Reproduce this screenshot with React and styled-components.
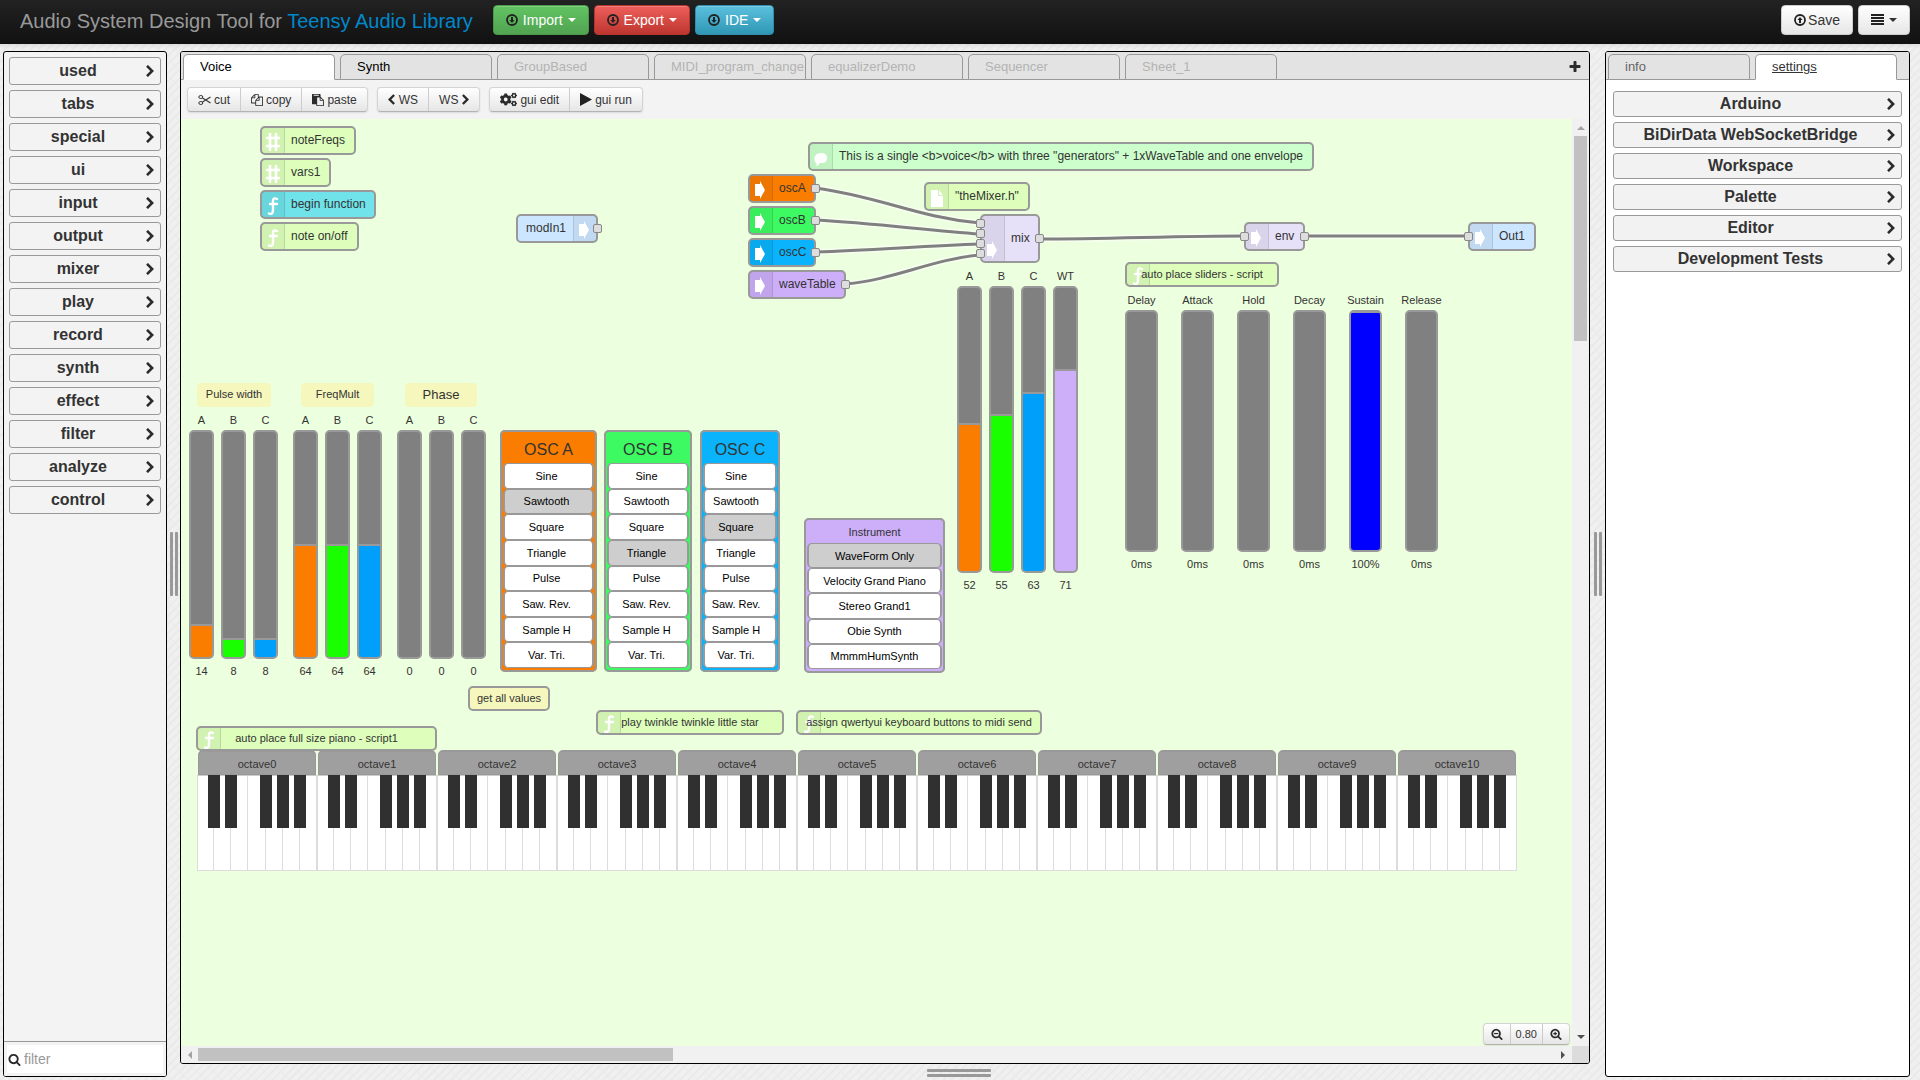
import { useState } from "react"
import styled, { createGlobalStyle, css } from "styled-components"
import { FaCogs } from "react-icons/fa"

const GlobalStyle = createGlobalStyle`
  *,
  *::before,
  *::after {
    box-sizing: border-box;
  }

  body {
    margin: 0;
    font-family: "Liberation Sans", Arial, sans-serif;
    font-size: 14px;
    line-height: 20px;
    color: #333;
    background-color: #f0f0f0;
    background-image:
      repeating-linear-gradient(-45deg, #eaeaea 0 2px, transparent 2px 6px),
      repeating-linear-gradient(45deg, #ededed 0 2px, transparent 2px 12px);
  }

  button,
  input {
    font-family: inherit;
    color: inherit;
    margin: 0;
  }

  svg {
    display: block;
    flex-shrink: 0;
  }
`

/* ---------- icons ---------- */

const glyphs = {
  right:
    "M1363 877l-742 742q-19 19-45 19t-45-19l-166-166q-19-19-19-45t19-45l531-531-531-531q-19-19-19-45t19-45l166-166q19-19 45-19t45 19l742 742q19 19 19 45t-19 45z",
  left:
    "M1427 301l-531 531 531 531q19 19 19 45t-19 45l-166 166q-19 19-45 19t-45-19l-742-742q-19-19-19-45t19-45l742-742q19-19 45-19t45 19l166 166q19 19 19 45t-19 45z",
  plus:
    "M1600 736v192q0 40-28 68t-68 28h-416v416q0 40-28 68t-68 28h-192q-40 0-68-28t-28-68v-416h-416q-40 0-68-28t-28-68v-192q0-40 28-68t68-28h416v-416q0-40 28-68t68-28h192q40 0 68 28t28 68v416h416q40 0 68 28t28 68z",
  search:
    "M1216 832q0-185-131.500-316.500t-316.500-131.500-316.500 131.500-131.500 316.500 131.500 316.500 316.500 131.500 316.500-131.500 131.500-316.500zm512 832q0 52-38 90t-90 38q-54 0-90-38l-343-342q-179 124-399 124-143 0-273.500-55.500t-225-150-150-225-55.500-273.500 55.500-273.500 150-225 225-150 273.500-55.500 273.500 55.500 225 150 150 225 55.500 273.500q0 220-124 399l343 343q37 37 37 90z",
  copy:
    "M1696 384q40 0 68 28t28 68v1216q0 40-28 68t-68 28h-960q-40 0-68-28t-28-68v-288h-544q-40 0-68-28t-28-68v-672q0-40 20-88t48-76l408-408q28-28 76-48t88-20h416q40 0 68 28t28 68v328q68-40 128-40h416zm-544 213l-299 299h299v-299zm-640-384l-299 299h299v-299zm196 647l316-316v-416h-384v416q0 40-28 68t-68 28h-416v640h512v-256q0-40 20-88t48-76zm956 804v-1152h-384v416q0 40-28 68t-68 28h-416v640h896z",
  paste:
    "M768 1664h896v-640h-416q-40 0-68-28t-28-68v-416h-384v1152zm256-1440v-64q0-13-9.500-22.500t-22.500-9.500h-704q-13 0-22.500 9.500t-9.500 22.500v64q0 13 9.500 22.500t22.500 9.500h704q13 0 22.500-9.500t9.500-22.500zm256 672h299l-299-299v299zm512 128v672q0 40-28 68t-68 28h-960q-40 0-68-28t-28-68v-160h-544q-40 0-68-28t-28-68v-1344q0-40 28-68t68-28h1088q40 0 68 28t28 68v328q21 13 36 28l408 408q28 28 48 76t20 88z",
}

const Glyph = ({ name, size = 12, children }) => (
  <svg width={size} height={size} viewBox="0 0 1792 1792" fill="#2b2b2b" aria-hidden="true">
    <path d={glyphs[name]} />
    {children}
  </svg>
)

const Chevron = ({ dir = "right", height = 12 }) => (
  <svg
    width={Math.round(height * 0.66)}
    height={height}
    viewBox={dir === "right" ? "320 40 1080 1584" : "392 40 1080 1584"}
    fill="#2b2b2b"
    aria-hidden="true"
  >
    <path d={glyphs[dir]} />
  </svg>
)

const CircleArrow = ({ up }) => (
  <svg width="12" height="12" viewBox="0 0 12 12" aria-hidden="true">
    <circle cx="6" cy="6" r="5" fill="none" stroke="#222" strokeWidth="1.8" />
    <path
      d="M5 3h2v3h1.600L6 9 3.400 6H5z"
      fill="#222"
      transform={up ? "rotate(180 6 6)" : undefined}
    />
  </svg>
)

const Scissors = () => (
  <svg width="13" height="12" viewBox="0 0 13 12" fill="none" stroke="#333" aria-hidden="true">
    <ellipse cx="2.800" cy="3" rx="2" ry="1.500" />
    <ellipse cx="2.800" cy="9" rx="2" ry="1.500" />
    <path d="M4.500 4L12.500 9M4.500 8L12.500 3" strokeWidth="1.100" />
  </svg>
)

const Play = () => (
  <svg width="12" height="13" viewBox="0 0 12 13" fill="#222" aria-hidden="true">
    <path d="M0 0v13L12 6.500z" />
  </svg>
)

const Bars = () => (
  <svg width="13" height="12" viewBox="0 0 13 12" fill="#222" aria-hidden="true">
    <path d="M0 0h13v2H0zM0 3h13v2H0zM0 6h13v2H0zM0 9h13v2H0z" />
  </svg>
)

const NodeIcon = ({ name }) => (
  <svg width="14" height="18" viewBox="0 0 14 18" aria-hidden="true">
    {name === "arrow" && <path d="M1 3h5V0l5 9-5 9v-3H1z" fill="#fff" />}
    {name === "hash" && (
      <path d="M4 0v18M10 0v18M0 5h14M0 13h14" stroke="#fff" strokeWidth="2.600" />
    )}
    {name === "fn" && (
      <path
        d="M11 2Q7 0 7 4v9q0 5-4 3.500M4 7h7"
        fill="none"
        stroke="#fff"
        strokeWidth="2.400"
        strokeLinecap="round"
      />
    )}
    {name === "bubble" && (
      <path d="M7 4c4 0 6 2 6 5s-2 5-5 5c-2 0-3 0-3 1s-2 2-3 2c1-1 1-2 0-3-3-3-2-10 5-10z" fill="#fff" />
    )}
    {name === "file" && <path d="M1 1h7v6h5v11H1zM9 1l4 5H9z" fill="#fff" />}
  </svg>
)

/* ---------- shell ---------- */

const Shell = styled.div`
  display: flex;
  flex-direction: column;
  height: 100vh;
`

const Header = styled.header`
  display: flex;
  align-items: center;
  gap: 5px;
  height: 44px;
  padding: 0 10px 4px 20px;
  background: linear-gradient(#222, #111);
  box-shadow: 0 1px 5px rgba(0, 0, 0, 0.1);
`

const HeaderStart = styled.div`
  display: flex;
  align-items: center;
  gap: 5px;
  margin-right: auto;
`

const Brand = styled.h1`
  margin: 0;
  padding: 2px 15px 0 0;
  font-size: 20px;
  font-weight: 400;
  line-height: 20px;
  color: #999;
  white-space: nowrap;

  a {
    color: #08c;
    text-decoration: none;
  }
`

const tones = {
  green: css`
    color: #fff;
    background: linear-gradient(#62c462, #51a351);
    border-color: #4b9a4b;
  `,
  red: css`
    color: #fff;
    background: linear-gradient(#ee5f5b, #bd362f);
    border-color: #b5342e;
  `,
  cyan: css`
    color: #fff;
    background: linear-gradient(#5bc0de, #2f96b4);
    border-color: #2f8fac;
  `,
  plain: css`
    color: #333;
    background: linear-gradient(#fff, #e6e6e6);
    border-color: #ccc;
  `,
}

const HeaderButton = styled.button`
  display: flex;
  align-items: center;
  gap: ${({ $tight }) => ($tight ? 2 : 5)}px;
  height: 30px;
  padding: 0 12px;
  border: 1px solid;
  border-radius: 4px;
  font-size: 14px;
  line-height: 20px;
  box-shadow: inset 0 1px 0 rgba(255, 255, 255, 0.2);
  ${({ $tone }) => tones[$tone]}
`

const Caret = styled.span`
  border: 4px solid transparent;
  border-top-color: currentColor;
  border-bottom: 0;
`

const Main = styled.main`
  flex: 1;
  display: grid;
  grid-template-columns: 164px 13px minmax(0, 1fr) 15px 305px;
  min-height: 0;
  padding: 7px 10px 3px 3px;
`

const Panel = styled.section`
  display: flex;
  flex-direction: column;
  min-width: 0;
  min-height: 0;
  background: ${({ $bg }) => $bg};
  border: 1px solid #000;
  border-radius: 3px;
  overflow: hidden;
`

const Column = styled.div`
  display: flex;
  flex-direction: column;
  min-width: 0;
  min-height: 0;

  > ${Panel} {
    flex: 1;
  }
`

const Splitter = styled.div`
  display: flex;
  flex-direction: ${({ $horizontal }) => ($horizontal ? "column" : "row")};
  align-items: center;
  justify-content: center;
  gap: 2px;
  ${({ $horizontal }) => $horizontal && "height: 13px; padding: 4px 0 0 148px;"}

  &::before,
  &::after {
    content: "";
    width: ${({ $horizontal }) => ($horizontal ? "64px" : "3px")};
    height: ${({ $horizontal }) => ($horizontal ? "3px" : "64px")};
    background: #999;
    border-radius: 1px;
  }
`

/* ---------- category lists ---------- */

const CategoryList = styled.nav`
  flex: 1;
  display: flex;
  flex-direction: column;
  gap: 5px;
  padding: ${({ $pad }) => $pad};
`

const CategoryButton = styled.button`
  display: flex;
  align-items: center;
  height: ${({ $h }) => $h}px;
  padding: 0 6px 0 0;
  border: 1px solid #999;
  border-radius: 3px;
  background: ${({ $bg }) => $bg};
  font-size: 16px;
  font-weight: 700;
  line-height: 20px;

  span {
    flex: 1;
    text-align: center;
  }
`

const FilterBar = styled.label`
  display: flex;
  align-items: center;
  gap: 3px;
  height: 35px;
  margin-top: auto;
  padding-left: 4px;
  border-top: 1px solid #999;
  background: #fff;
  box-shadow: inset 0 0 0 3px #f3f3f3;
`

const FilterInput = styled.input`
  flex: 1;
  min-width: 0;
  padding: 0;
  border: 0;
  outline: 0;
  background: transparent;
  font-size: 14px;
  line-height: 20px;

  &::placeholder {
    color: #999;
    opacity: 1;
  }
`

/* ---------- tabs and toolbar ---------- */

const TabBar = styled.div`
  display: flex;
  align-items: flex-start;
  gap: 5px;
  height: 28px;
  flex-shrink: 0;
  padding: 2px 7px 0 2px;
  border-bottom: 1px solid #999;
  background: #e3e3e3;
`

const Tab = styled.button`
  width: ${({ $w }) => $w}px;
  height: 26px;
  flex-shrink: 0;
  padding: 0 0 0 16px;
  border: 1px solid #999;
  border-bottom-color: ${({ $active }) => ($active ? "#fff" : "#999")};
  border-radius: 5px 5px 0 0;
  background: ${({ $active }) => ($active ? "#fff" : "#e3e3e3")};
  color: ${({ $color }) => $color};
  font-size: 13px;
  line-height: 20px;
  text-align: left;
  text-decoration: ${({ $underline }) => ($underline ? "underline" : "none")};
  white-space: nowrap;
  overflow: hidden;
`

const AddTab = styled.button`
  margin-left: auto;
  height: 26px;
  padding: 0;
  border: 0;
  background: none;
`

const Toolbar = styled.div`
  display: flex;
  gap: 9px;
  flex-shrink: 0;
  height: 39px;
  padding: 7px 6px;
  background: #f3f3f3;
`

const ToolButton = styled.button`
  display: flex;
  align-items: center;
  gap: 4px;
  height: ${({ $h = 23 }) => $h}px;
  padding: 0 ${({ $pad = 10 }) => $pad}px;
  border: 0;
  background: none;
  font-size: ${({ $size = 12 }) => $size}px;
  line-height: 16px;
  white-space: nowrap;

  & + & {
    border-left: 1px solid #ccc;
  }
`

const ButtonGroup = styled.div`
  display: flex;
  border: 1px solid #d4d4d4;
  border-bottom-color: #b3b3b3;
  border-radius: 4px;
  background: linear-gradient(#fff, #e6e6e6);
  box-shadow: 0 1px 2px rgba(0, 0, 0, 0.1);

  ${ToolButton} {
    gap: ${({ $tight }) => ($tight ? 3 : 4)}px;
  }
`

/* ---------- workspace ---------- */

const Workspace = styled.div`
  flex: 1;
  display: grid;
  grid-template: minmax(0, 1fr) 17px / minmax(0, 1fr) 17px;
  min-height: 0;
`

const Canvas = styled.div`
  position: relative;
  overflow: hidden;
  background: #ecffde;
`

const ScrollTrack = styled.div`
  display: flex;
  flex-direction: ${({ $vertical }) => ($vertical ? "column" : "row")};
  align-items: center;
  justify-content: space-between;
  padding: ${({ $vertical }) => ($vertical ? "6px 2px" : "2px 6px")};
  background: #f1f1f1;
`

const ScrollRail = styled.div`
  flex: 1;
  align-self: stretch;
  margin: ${({ $vertical }) => ($vertical ? "5px 0" : "0 5px")};
`

const ScrollThumb = styled.div`
  width: ${({ $vertical }) => ($vertical ? "100%" : "35%")};
  height: ${({ $vertical }) => ($vertical ? "23%" : "100%")};
  background: #c1c1c1;
`

const ScrollCorner = styled.div`
  background: #dcdcdc;
`

const arrowShape = {
  up: "M0 5L4 1l4 4z",
  down: "M0 1l4 4 4-4z",
  left: "M5 0L1 4l4 4z",
  right: "M1 0l4 4-4 4z",
}

const ScrollArrow = ({ dir, color }) => {
  const tall = dir === "left" || dir === "right"
  return (
    <svg width={tall ? 6 : 8} height={tall ? 8 : 6} fill={color} aria-hidden="true">
      <path d={arrowShape[dir]} />
    </svg>
  )
}

/* Everything on the canvas is placed at its own x/y. */
const placed = css`
  position: absolute;
  left: ${({ $x }) => $x}px;
  top: ${({ $y }) => $y}px;
`

const Wires = styled.svg`
  position: absolute;
  inset: 0;
  width: 100%;
  height: 100%;
  fill: none;
`

const NodeBox = styled.div`
  ${placed}
  display: flex;
  flex-direction: ${({ $flip }) => ($flip ? "row-reverse" : "row")};
  width: ${({ $w }) => $w}px;
  height: ${({ $h }) => $h}px;
  border: 2px solid #999;
  border-radius: 5px;
  background: ${({ $bg }) => $bg};
  font-size: 12px;
  line-height: 16px;
  white-space: nowrap;
`

const NodeBadge = styled.span`
  display: flex;
  align-items: ${({ $low }) => ($low ? "flex-end" : "center")};
  width: 23px;
  padding: 3px 0 ${({ $low }) => ($low ? 2 : 0)}px 4px;
  background: rgba(0, 0, 0, 0.05);
  border: 0 solid rgba(0, 0, 0, 0.1);
  border-width: ${({ $flip }) => ($flip ? "0 0 0 1px" : "0 1px 0 0")};
`

const NodeLabel = styled.span`
  flex: 1;
  align-self: center;
  padding: 0 0 2px ${({ $flip }) => ($flip ? 8 : 6)}px;
`

const Port = styled.span`
  ${placed}
  width: 9px;
  height: 9px;
  border: 1px solid #888;
  border-radius: 2px;
  background: #ddd;
`

const ScriptButton = styled.button`
  ${placed}
  display: grid;
  align-items: center;
  width: ${({ $w }) => $w}px;
  height: 25px;
  padding: 0;
  border: 2px solid #999;
  border-radius: 5px;
  background: ${({ $bg = "#ddffbb" }) => $bg};
  font-size: 11px;
  line-height: 16px;
  white-space: nowrap;

  > * {
    grid-area: 1 / 1;
  }

  ${NodeBadge} {
    height: 21px;
  }
`

const ScriptLabel = styled.span`
  padding-bottom: 2px;
`

const Tag = styled.div`
  ${placed}
  width: ${({ $w }) => $w}px;
  height: 24px;
  border-radius: 4px;
  background: #f5f7bd;
  font-size: ${({ $size = 11 }) => $size}px;
  line-height: 23px;
  text-align: center;
`

const SliderBank = styled.div`
  ${placed}
  display: flex;
  gap: ${({ $gap }) => $gap}px;
`

const SliderField = styled.label`
  display: flex;
  flex-direction: column;
  align-items: center;
  width: ${({ $w }) => $w}px;
  font-size: 11px;
  line-height: 16px;
  white-space: nowrap;
`

const SliderName = styled.span`
  margin-bottom: 2px;
`

const SliderValue = styled.output`
  margin-top: 4px;
`

const Slider = styled.input`
  appearance: none;
  writing-mode: vertical-lr;
  direction: rtl;
  width: ${({ $w }) => $w}px;
  height: ${({ $h }) => $h}px;
  border: 2px solid #999;
  border-radius: 5px;
  background: ${({ $fill, $pct }) =>
    $pct > 0
      ? `linear-gradient(to top, ${$fill} calc(${$pct}% - 1px), #999 calc(${$pct}% - 1px) calc(${$pct}% + 1px), #808080 0)`
      : "#808080"};

  &::-webkit-slider-thumb {
    appearance: none;
    width: 100%;
    height: 1px;
    background: transparent;
  }
`

const ListBox = styled.fieldset`
  ${placed}
  display: flex;
  flex-direction: column;
  width: ${({ $w }) => $w}px;
  height: ${({ $h }) => $h}px;
  min-width: 0;
  margin: 0;
  padding: 0 1px 2px;
  border: 2px solid #999;
  border-radius: 5px;
  background: ${({ $bg }) => $bg};
`

const ListTitle = styled.div`
  flex-shrink: 0;
  height: ${({ $h }) => $h}px;
  padding-top: ${({ $big }) => ($big ? 8 : 4)}px;
  font-size: ${({ $big }) => ($big ? 16 : 11)}px;
  line-height: ${({ $big }) => ($big ? 20 : 16)}px;
  text-align: center;
`

const ListItem = styled.button`
  flex: 1;
  min-height: 0;
  padding: 0 ${({ $shift }) => $shift}px 0 0;
  border: 2px solid #999;
  border-bottom-width: 1px;
  border-top-width: 1px;
  border-radius: 5px;
  background: ${({ $selected }) => ($selected ? "#cecece" : "#fff")};
  color: #000;
  font-size: 11px;
  line-height: 16px;
  white-space: nowrap;
`

const Piano = styled.div`
  ${placed}
  display: flex;
`

const OctaveBox = styled.div`
  width: 120px;
`

const OctaveTitle = styled.div`
  height: 25px;
  margin: 0 1px;
  padding-top: 4px;
  border: 1px solid #999;
  border-top-width: 2px;
  border-radius: 5px 5px 0 0;
  background: #9f9f9f;
  font-size: 11px;
  line-height: 16px;
  text-align: center;
`

const Keys = styled.div`
  position: relative;
  display: grid;
  grid-template-columns: repeat(7, 1fr);
  height: 96px;
`

const WhiteKey = styled.button`
  padding: 0;
  border: 1px solid #dcdcdc;
  border-left-width: ${({ $first }) => ($first ? 1 : 0)}px;
  border-top-color: #ccc;
  background: #fff;
`

const BlackKey = styled.button`
  position: absolute;
  top: 0;
  left: calc(${({ $after }) => $after} * 100% / 7 - 6px);
  width: 12px;
  height: 53px;
  padding: 0;
  border: 0;
  background: #303030;
`

const ZoomControls = styled(ButtonGroup)`
  position: absolute;
  right: 2px;
  bottom: 1px;
`

/* ---------- data ---------- */

const palette = [
  "used", "tabs", "special", "ui", "input", "output", "mixer",
  "play", "record", "synth", "effect", "filter", "analyze", "control",
]

const settings = [
  "Arduino", "BiDirData WebSocketBridge", "Workspace", "Palette", "Editor", "Development Tests",
]

const sheets = [
  { name: "Voice", color: "#000" },
  { name: "Synth", color: "#000" },
  { name: "GroupBased" },
  { name: "MIDI_program_change" },
  { name: "equalizerDemo" },
  { name: "Sequencer" },
  { name: "Sheet_1" },
]

const nodes = [
  { label: "noteFreqs", icon: "hash", x: 79, y: 7, w: 96, bg: "#ddffbb" },
  { label: "vars1", icon: "hash", x: 79, y: 39, w: 71, bg: "#ddffbb" },
  { label: "begin function", icon: "fn", x: 79, y: 71, w: 116, bg: "#6fe2ea" },
  { label: "note on/off", icon: "fn", x: 79, y: 103, w: 99, bg: "#ddffbb" },
  { label: "modIn1", icon: "arrow", x: 335, y: 95, w: 82, bg: "#cce6ff", flip: true, outs: 1 },
  { label: "oscA", icon: "arrow", x: 567, y: 55, w: 68, bg: "#fa7d00", outs: 1 },
  { label: "oscB", icon: "arrow", x: 567, y: 87, w: 68, bg: "#3dfa62", outs: 1 },
  { label: "oscC", icon: "arrow", x: 567, y: 119, w: 68, bg: "#0ab3fb", outs: 1 },
  { label: "waveTable", icon: "arrow", x: 567, y: 151, w: 98, bg: "#ccaef9", outs: 1 },
  {
    label: 'This is a single <b>voice</b> with three "generators" + 1xWaveTable and one envelope',
    icon: "bubble", x: 627, y: 23, w: 506, bg: "#ccffcc",
  },
  { label: '"theMixer.h"', icon: "file", x: 743, y: 63, w: 106, bg: "#ddffbb" },
  { label: "mix", icon: "arrow", x: 799, y: 95, w: 60, h: 49, bg: "#e6e0f8", ins: 4, outs: 1 },
  { label: "env", icon: "arrow", x: 1063, y: 103, w: 61, bg: "#e6e0f8", ins: 1, outs: 1 },
  { label: "Out1", icon: "arrow", x: 1287, y: 103, w: 68, bg: "#cce6ff", ins: 1 },
]

const wires = [
  "M635 69C700 78 735 98 799 104",
  "M635 101C690 104 745 111 799 115",
  "M635 133C690 131 745 127 799 125",
  "M665 165C712 161 752 140 799 136",
  "M859 120C925 120 997 117 1063 117",
  "M1124 117H1287",
]

const scripts = [
  { label: "auto place sliders - script", x: 944, y: 143, w: 154 },
  { label: "play twinkle twinkle little star", x: 415, y: 591, w: 188 },
  { label: "assign qwertyui keyboard buttons to midi send", x: 615, y: 591, w: 246 },
  { label: "auto place full size piano - script1", x: 15, y: 607, w: 241 },
]

const ORANGE = "#fa7d00"
const GREEN = "#1aff00"
const BLUE = "#00a0fa"

const abc = (values, max) => [
  { name: "A", value: values[0], max, fill: ORANGE },
  { name: "B", value: values[1], max, fill: GREEN },
  { name: "C", value: values[2], max, fill: BLUE },
]

const banks = [
  { x: 8, y: 293, w: 25, h: 229, gap: 7, sliders: abc([14, 8, 8], 100) },
  { x: 112, y: 293, w: 25, h: 229, gap: 7, sliders: abc([64, 64, 64], 128) },
  { x: 216, y: 293, w: 25, h: 229, gap: 7, sliders: abc([0, 0, 0], 100) },
  {
    x: 776, y: 149, w: 25, h: 287, gap: 7,
    sliders: [...abc([52, 55, 63], 100), { name: "WT", value: 71, max: 100, fill: "#ccaef9" }],
  },
  {
    x: 944, y: 173, w: 33, h: 242, gap: 23,
    sliders: ["Delay", "Attack", "Hold", "Decay", "Sustain", "Release"].map((name) => ({
      name,
      max: 100,
      value: name === "Sustain" ? 100 : 0,
      unit: name === "Sustain" ? "%" : "ms",
      fill: "#0000ff",
    })),
  },
]

const waves = [
  "Sine", "Sawtooth", "Square", "Triangle", "Pulse", "Saw. Rev.", "Sample H", "Var. Tri.",
]

const lists = [
  { title: "OSC A", big: true, items: waves, selected: 1, x: 319, y: 311, w: 97, h: 242, head: 31, shift: 4, bg: "#fa7d00" },
  { title: "OSC B", big: true, items: waves, selected: 3, x: 423, y: 311, w: 88, h: 242, head: 31, shift: 3, bg: "#3dfa62" },
  { title: "OSC C", big: true, items: waves, selected: 2, x: 519, y: 311, w: 80, h: 242, head: 31, shift: 8, bg: "#0ab3fb" },
  {
    title: "Instrument",
    items: ["WaveForm Only", "Velocity Grand Piano", "Stereo Grand1", "Obie Synth", "MmmmHumSynth"],
    selected: 0, x: 623, y: 399, w: 141, h: 155, head: 23, shift: 0, bg: "#ccaef9",
  },
]

/* ---------- parts ---------- */

function Node({ node }) {
  const { label, icon, x, y, w, h = 29, bg, flip, ins = 0, outs = 0 } = node
  const tall = h > 40

  return (
    <NodeBox $x={x} $y={y} $w={w} $h={h} $bg={bg} $flip={flip}>
      <NodeBadge $flip={flip} $low={tall}>
        <NodeIcon name={icon} />
      </NodeBadge>
      <NodeLabel $flip={flip}>{label}</NodeLabel>
      {Array.from({ length: ins }, (_, i) => (
        <Port key={i} $x={-6} $y={ins > 1 ? 3 + i * 10 : 8} />
      ))}
      {outs > 0 && <Port $x={w - 7} $y={tall ? 18 : 8} />}
    </NodeBox>
  )
}

function Bank({ bank }) {
  const [values, setValues] = useState(bank.sliders.map((s) => s.value))

  return (
    <SliderBank $x={bank.x} $y={bank.y} $gap={bank.gap}>
      {bank.sliders.map((s, i) => (
        <SliderField key={s.name} $w={bank.w}>
          <SliderName>{s.name}</SliderName>
          <Slider
            type="range"
            min="0"
            max={s.max}
            value={values[i]}
            onChange={(e) => setValues(values.map((v, j) => (j === i ? +e.target.value : v)))}
            $w={bank.w}
            $h={bank.h}
            $fill={s.fill}
            $pct={(values[i] / s.max) * 100}
          />
          <SliderValue>
            {values[i]}
            {s.unit}
          </SliderValue>
        </SliderField>
      ))}
    </SliderBank>
  )
}

function List({ list }) {
  const [selected, setSelected] = useState(list.selected)

  return (
    <ListBox $x={list.x} $y={list.y} $w={list.w} $h={list.h} $bg={list.bg} aria-label={list.title}>
      <ListTitle $big={list.big} $h={list.head}>{list.title}</ListTitle>
      {list.items.map((item, i) => (
        <ListItem key={item} $shift={list.shift} $selected={i === selected} onClick={() => setSelected(i)}>
          {item}
        </ListItem>
      ))}
    </ListBox>
  )
}

function Octave({ index }) {
  return (
    <OctaveBox>
      <OctaveTitle>octave{index}</OctaveTitle>
      <Keys>
        {["C", "D", "E", "F", "G", "A", "B"].map((key, i) => (
          <WhiteKey key={key} $first={i === 0} aria-label={`${key}${index}`} />
        ))}
        {[1, 2, 4, 5, 6].map((after) => (
          <BlackKey key={after} $after={after} aria-label={`black key ${after}`} />
        ))}
      </Keys>
    </OctaveBox>
  )
}

function Categories({ items, height, bg, pad }) {
  return (
    <CategoryList $pad={pad}>
      {items.map((item) => (
        <CategoryButton key={item} $h={height} $bg={bg}>
          <span>{item}</span>
          <Chevron height={12} />
        </CategoryButton>
      ))}
    </CategoryList>
  )
}

function Editor() {
  const [active, setActive] = useState(0)

  return (
    <Panel $bg="#f3f3f3">
      <TabBar>
        {sheets.map((sheet, i) => (
          <Tab
            key={sheet.name}
            $w={152}
            $active={i === active}
            $color={sheet.color ?? "#b3b3b3"}
            onClick={() => setActive(i)}
          >
            {sheet.name}
          </Tab>
        ))}
        <AddTab aria-label="add sheet">
          <Glyph name="plus" size={14} />
        </AddTab>
      </TabBar>
      <Toolbar>
        <ButtonGroup $tight>
          <ToolButton><Scissors />cut</ToolButton>
          <ToolButton><Glyph name="copy" />copy</ToolButton>
          <ToolButton><Glyph name="paste" />paste</ToolButton>
        </ButtonGroup>
        <ButtonGroup>
          <ToolButton><Chevron dir="left" height={11} />WS</ToolButton>
          <ToolButton>WS<Chevron height={11} /></ToolButton>
        </ButtonGroup>
        <ButtonGroup $tight>
          <ToolButton><FaCogs size={17} color="#2b2b2b" />gui edit</ToolButton>
          <ToolButton><Play />gui run</ToolButton>
        </ButtonGroup>
      </Toolbar>
      <Workspace>
        <Canvas>
          {nodes.filter((n) => n.icon === "file").map((n) => <Node key={n.label} node={n} />)}
          <Wires>
            {wires.map((d) => (
              <g key={d}>
                <path d={d} stroke="#f6fff0" strokeWidth="6" />
                <path d={d} stroke="#808080" strokeWidth="3" />
              </g>
            ))}
          </Wires>
          {nodes.filter((n) => n.icon !== "file").map((n) => <Node key={n.label} node={n} />)}
          {scripts.map((s) => (
            <ScriptButton key={s.label} $x={s.x} $y={s.y} $w={s.w}>
              <NodeBadge><NodeIcon name="fn" /></NodeBadge>
              <ScriptLabel>{s.label}</ScriptLabel>
            </ScriptButton>
          ))}
          <ScriptButton $x={287} $y={567} $w={82} $bg="#f5f7bd">
            <ScriptLabel>get all values</ScriptLabel>
          </ScriptButton>
          <Tag $x={16} $y={264} $w={74}>Pulse width</Tag>
          <Tag $x={120} $y={264} $w={73}>FreqMult</Tag>
          <Tag $x={224} $y={264} $w={72} $size={13}>Phase</Tag>
          {banks.map((bank) => <Bank key={bank.x} bank={bank} />)}
          {lists.map((list) => <List key={list.title} list={list} />)}
          <Piano $x={16} $y={631}>
            {Array.from({ length: 11 }, (_, i) => <Octave key={i} index={i} />)}
          </Piano>
          <ZoomControls>
            <ToolButton $h={20} $pad={7} aria-label="zoom out">
              <Glyph name="search"><path d="M450 740h640v180h-640z" /></Glyph>
            </ToolButton>
            <ToolButton $h={20} $pad={5} $size={11}>0.80</ToolButton>
            <ToolButton $h={20} $pad={7} aria-label="zoom in">
              <Glyph name="search"><path d="M500 740h180v-180h180v180h180v180h-180v180h-180v-180h-180z" /></Glyph>
            </ToolButton>
          </ZoomControls>
        </Canvas>
        <ScrollTrack $vertical>
          <ScrollArrow dir="up" color="#a3a3a3" />
          <ScrollRail $vertical><ScrollThumb $vertical /></ScrollRail>
          <ScrollArrow dir="down" color="#505050" />
        </ScrollTrack>
        <ScrollTrack>
          <ScrollArrow dir="left" color="#a3a3a3" />
          <ScrollRail><ScrollThumb /></ScrollRail>
          <ScrollArrow dir="right" color="#505050" />
        </ScrollTrack>
        <ScrollCorner />
      </Workspace>
    </Panel>
  )
}

export default function App() {
  return (
    <Shell>
      <GlobalStyle />
      <Header>
        <HeaderStart>
          <Brand>
            Audio System Design Tool for <a href="#library">Teensy Audio Library</a>
          </Brand>
          <HeaderButton $tone="green"><CircleArrow />Import<Caret /></HeaderButton>
          <HeaderButton $tone="red"><CircleArrow />Export<Caret /></HeaderButton>
          <HeaderButton $tone="cyan"><CircleArrow />IDE<Caret /></HeaderButton>
        </HeaderStart>
        <HeaderButton $tone="plain" $tight><CircleArrow up />Save</HeaderButton>
        <HeaderButton $tone="plain" aria-label="menu"><Bars /><Caret /></HeaderButton>
      </Header>
      <Main>
        <Panel $bg="#f3f3f3">
          <Categories items={palette} height={28} bg="#f3f3f3" pad="5px" />
          <FilterBar>
            <Glyph name="search" size={13} />
            <FilterInput type="text" placeholder="filter" aria-label="filter" />
          </FilterBar>
        </Panel>
        <Splitter />
        <Column>
          <Editor />
          <Splitter $horizontal />
        </Column>
        <Splitter />
        <Panel $bg="#fff">
          <TabBar>
            <Tab $w={142} $color="#666">info</Tab>
            <Tab $w={142} $active $underline $color="#333">settings</Tab>
          </TabBar>
          <Categories items={settings} height={26} bg="#f2f2f2" pad="11px 7px" />
        </Panel>
      </Main>
    </Shell>
  )
}
